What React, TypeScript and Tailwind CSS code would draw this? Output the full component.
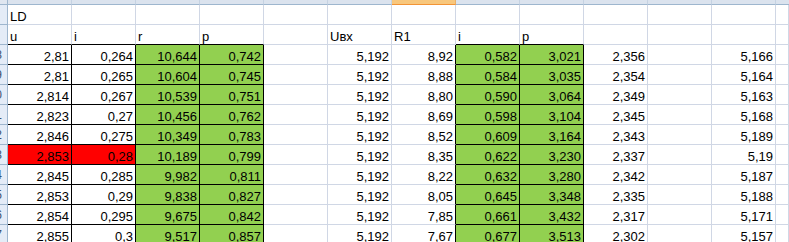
import React from "react"

type Cell = { v?: string; left?: boolean }

const rowNums = ["18", "19", "20", "21", "22", "23", "24", "25", "26", "27"]

const data: string[][] = [
  ["2,81", "0,264", "10,644", "0,742", "5,192", "8,92", "0,582", "3,021", "2,356", "5,166"],
  ["2,81", "0,265", "10,604", "0,745", "5,192", "8,88", "0,584", "3,035", "2,354", "5,164"],
  ["2,814", "0,267", "10,539", "0,751", "5,192", "8,80", "0,590", "3,064", "2,349", "5,163"],
  ["2,823", "0,27", "10,456", "0,762", "5,192", "8,69", "0,598", "3,104", "2,345", "5,168"],
  ["2,846", "0,275", "10,349", "0,783", "5,192", "8,52", "0,609", "3,164", "2,343", "5,189"],
  ["2,853", "0,28", "10,189", "0,799", "5,192", "8,35", "0,622", "3,230", "2,337", "5,19"],
  ["2,845", "0,285", "9,982", "0,811", "5,192", "8,22", "0,632", "3,280", "2,342", "5,187"],
  ["2,853", "0,29", "9,838", "0,827", "5,192", "8,05", "0,645", "3,348", "2,335", "5,188"],
  ["2,854", "0,295", "9,675", "0,842", "5,192", "7,85", "0,661", "3,432", "2,317", "5,171"],
  ["2,855", "0,3", "9,517", "0,857", "5,192", "7,67", "0,677", "3,513", "2,302", "5,157"],
]

const cellBase =
  "h-[20px] shrink-0 flex items-end overflow-hidden whitespace-nowrap border-r border-b leading-[15px]"

function GridCell({ v, left, cls }: Cell & { cls: string }) {
  return (
    <div className={`${cellBase} ${left ? "justify-start pl-[2px]" : "justify-end pr-[2px]"} ${cls}`}>
      {v}
    </div>
  )
}

// row numbers sit mostly outside the visible strip, only a sliver shows
function RowHead({ n }: { n?: string }) {
  return (
    <div className="h-[20px] w-[8px] shrink-0 flex items-center justify-end overflow-hidden pr-[5px] border-r border-b border-[#9eb6ce] bg-[#e4ecf7] text-[12px] text-[#3b5170]">
      {n}
    </div>
  )
}

const gray = "w-[64px] border-[#d0d7e5] bg-white"
const grayEdge = "w-[13px] border-[#d0d7e5] bg-white"
const boxed = "w-[64px] border-black"
const titled = "w-[64px] bg-white border-r-[#d0d7e5] border-b-black"

export default function App() {
  const headCols = Array.from({ length: 12 }, (_, i) => i)

  return (
    <div
      className="w-[789px] h-[242px] overflow-hidden bg-white text-[13px] text-black"
      style={{ fontFamily: '"Liberation Sans", Arial, sans-serif' }}
    >
      {/* column header strip */}
      <div className="flex h-[5px]">
        <div className="w-[8px] shrink-0 border-r border-b border-[#9eb6ce] bg-[#dfe6f0]" />
        {headCols.map((i) =>
          i === 6 ? (
            <div key={i} className="w-[64px] shrink-0 border-r border-b border-r-[#e9b068] border-b-[#f29436] bg-[#f8c77d]" />
          ) : (
            <div key={i} className="w-[64px] shrink-0 border-r border-b border-r-[#c5d2e2] border-b-[#9eb6ce] bg-[#dbe3ee]" />
          ),
        )}
        <div className="w-[13px] shrink-0 border-b border-[#9eb6ce] bg-[#dbe3ee]" />
      </div>

      {/* LD */}
      <div className="flex">
        <RowHead />
        <GridCell v="LD" left cls={gray} />
        {Array.from({ length: 11 }, (_, i) => (
          <GridCell key={i} cls={gray} />
        ))}
        <GridCell cls={grayEdge} />
      </div>

      {/* titles */}
      <div className="flex">
        <RowHead />
        <GridCell v="u" left cls={titled} />
        <GridCell v="i" left cls={titled} />
        <GridCell v="r" left cls={titled} />
        <GridCell v="p" left cls={titled} />
        <GridCell cls={gray} />
        <GridCell v="Uвх" left cls={gray} />
        <GridCell v="R1" left cls={gray} />
        <GridCell v="i" left cls={titled} />
        <GridCell v="p" left cls={titled} />
        <GridCell cls={gray} />
        <GridCell cls={gray} />
        <GridCell cls={gray} />
        <GridCell cls={grayEdge} />
      </div>

      {data.map((r, idx) => {
        const hot = idx === 5
        const ab = hot ? "bg-[#ff0000]" : "bg-white"
        return (
          <div key={idx} className="flex">
            <RowHead n={rowNums[idx]} />
            <GridCell v={r[0]} cls={`${boxed} ${ab}`} />
            <GridCell v={r[1]} cls={`${boxed} ${ab}`} />
            <GridCell v={r[2]} cls={`${boxed} bg-[#92d050]`} />
            <GridCell v={r[3]} cls={`${boxed} bg-[#92d050]`} />
            <GridCell cls={gray} />
            <GridCell v={r[4]} cls={gray} />
            <GridCell v={r[5]} cls="w-[64px] bg-white border-r-black border-b-[#d0d7e5]" />
            <GridCell v={r[6]} cls={`${boxed} bg-[#92d050]`} />
            <GridCell v={r[7]} cls={`${boxed} bg-[#92d050]`} />
            <GridCell v={r[8]} cls={gray} />
            <GridCell cls={gray} />
            <GridCell v={r[9]} cls={gray} />
            <GridCell cls={grayEdge} />
          </div>
        )
      })}
    </div>
  )
}
